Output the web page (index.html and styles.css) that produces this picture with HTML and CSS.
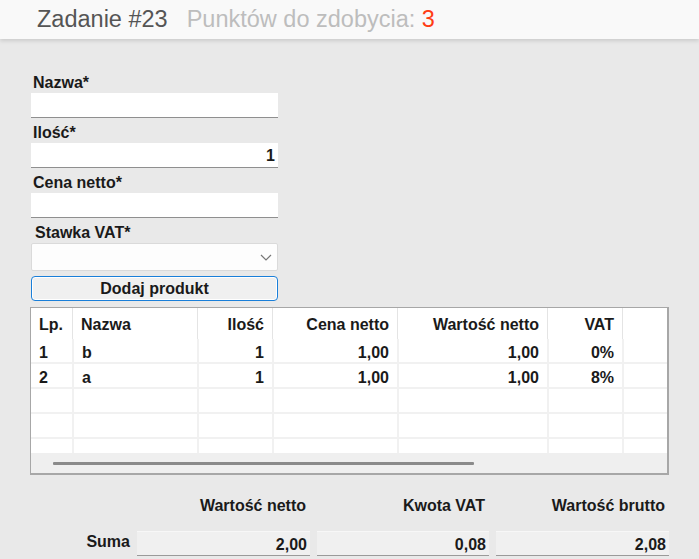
FILE: index.html
```html
<!DOCTYPE html>
<html lang="pl">
<head>
<meta charset="utf-8">
<title>Zadanie #23</title>
<link rel="stylesheet" href="styles.css">
</head>
<body>
<header class="topbar">
  <span class="task">Zadanie #23</span>
  <span class="points">Punktów do zdobycia: <span class="points-num">3</span></span>
</header>

<main class="content">
  <form class="form">
    <label class="field-label">Nazwa*</label>
    <div class="text-input"></div>
    <label class="field-label">Ilość*</label>
    <div class="text-input align-right">1</div>
    <label class="field-label">Cena netto*</label>
    <div class="text-input"></div>
    <label class="field-label label-shift">Stawka VAT*</label>
    <div class="select">
      <svg class="chevron" width="12" height="7" viewBox="0 0 12 7"><path d="M1 1 L6 6 L11 1" fill="none" stroke="#777" stroke-width="1.2"/></svg>
    </div>
    <div class="button">Dodaj produkt</div>
  </form>

  <div class="grid-box">
    <div class="grid-body">
      <div class="row head">
        <div class="cell c-lp">Lp.</div>
        <div class="cell c-name">Nazwa</div>
        <div class="cell c-qty num">Ilość</div>
        <div class="cell c-price num">Cena netto</div>
        <div class="cell c-net num">Wartość netto</div>
        <div class="cell c-vat num">VAT</div>
        <div class="cell c-rest"></div>
      </div>
      <div class="row">
        <div class="cell c-lp">1</div>
        <div class="cell c-name">b</div>
        <div class="cell c-qty num">1</div>
        <div class="cell c-price num">1,00</div>
        <div class="cell c-net num">1,00</div>
        <div class="cell c-vat num">0%</div>
        <div class="cell c-rest"></div>
      </div>
      <div class="row">
        <div class="cell c-lp">2</div>
        <div class="cell c-name">a</div>
        <div class="cell c-qty num">1</div>
        <div class="cell c-price num">1,00</div>
        <div class="cell c-net num">1,00</div>
        <div class="cell c-vat num">8%</div>
        <div class="cell c-rest"></div>
      </div>
      <div class="row">
        <div class="cell c-lp"></div><div class="cell c-name"></div><div class="cell c-qty"></div><div class="cell c-price"></div><div class="cell c-net"></div><div class="cell c-vat"></div><div class="cell c-rest"></div>
      </div>
      <div class="row">
        <div class="cell c-lp"></div><div class="cell c-name"></div><div class="cell c-qty"></div><div class="cell c-price"></div><div class="cell c-net"></div><div class="cell c-vat"></div><div class="cell c-rest"></div>
      </div>
      <div class="row">
        <div class="cell c-lp"></div><div class="cell c-name"></div><div class="cell c-qty"></div><div class="cell c-price"></div><div class="cell c-net"></div><div class="cell c-vat"></div><div class="cell c-rest"></div>
      </div>
    </div>
    <div class="hscroll"><div class="thumb"></div></div>
  </div>

  <div class="summary">
    <div></div>
    <div class="sum-head">Wartość netto</div>
    <div class="sum-head">Kwota VAT</div>
    <div class="sum-head">Wartość brutto</div>
    <div class="sum-label">Suma</div>
    <div class="sum-box">2,00</div>
    <div class="sum-box">0,08</div>
    <div class="sum-box">2,08</div>
  </div>
</main>
</body>
</html>
```

FILE: styles.css
```css
* { box-sizing: border-box; }

html, body {
  margin: 0;
  padding: 0;
  background: #e9e9e9;
  font-family: "Liberation Sans", Arial, sans-serif;
  color: #1a1a1a;
  width: 699px;
  height: 559px;
  overflow: hidden;
}

.topbar {
  height: 39px;
  background: #f9f9f9;
  box-shadow: 0 2px 4px rgba(0, 0, 0, 0.13);
  display: flex;
  align-items: center;
  padding-left: 37px;
  font-size: 23.5px;
  position: relative;
}

.task {
  color: #555;
  margin-right: 19px;
}

.points {
  color: #bdbdbd;
}

.points-num {
  color: #ff3c14;
}

.content {
  padding-top: 29px;
}

.form {
  width: 247px;
  margin-left: 31px;
  display: flex;
  flex-direction: column;
  font-weight: bold;
  font-size: 16px;
}

.field-label {
  height: 25px;
  padding-top: 4px;
  line-height: 21px;
  padding-left: 2px;
}

.label-shift {
  padding-left: 4px;
}

.text-input {
  height: 25px;
  background: #fff;
  border-bottom: 1px solid #8f8f8f;
  line-height: 25px;
  padding: 0 3px;
}

.align-right {
  text-align: right;
}

.select {
  height: 28px;
  background: #fdfdfd;
  border: 1px solid #dadada;
  border-radius: 2px;
  display: flex;
  justify-content: flex-end;
  align-items: center;
  padding-right: 5px;
}

.button {
  margin-top: 5px;
  height: 25px;
  border: 1px solid #1a7fd9;
  border-radius: 4px;
  background: #f0f0f0;
  box-shadow: inset 0 0 0 1px #fff;
  text-align: center;
  line-height: 23px;
}

.grid-box {
  margin: 6px 0 0 30px;
  width: 639px;
  height: 168px;
  border: 2px solid #a7a7a7;
  border-left-width: 1px;
  border-top-width: 1px;
  background: #fff;
  display: flex;
  flex-direction: column;
  font-weight: bold;
  font-size: 16px;
}

.grid-body {
  height: 145px;
  overflow: hidden;
}

.row {
  display: grid;
  grid-template-columns: 41px 125px 75px 125px 150px 75px 1fr;
  height: 25px;
  border-bottom: 2px solid #f1f1f1;
}

.row.head {
  height: 31px;
  border-bottom: none;
}

.cell {
  padding: 2px 8px 0;
  line-height: 23px;
  border-left: 2px solid #f1f1f1;
  white-space: nowrap;
}

.row.head .cell {
  padding-top: 3px;
  line-height: 28px;
  border-left: 1px solid #e4e4e4;
}

.row .c-lp,
.row.head .c-lp {
  border-left: none;
}

.num {
  text-align: right;
}

.hscroll {
  flex: 1;
  background: #efefef;
  display: flex;
  align-items: center;
  padding-left: 22px;
}

.thumb {
  width: 421px;
  height: 3px;
  background: #8a8a8a;
  border-radius: 1px;
}

.summary {
  margin-top: 19px;
  display: grid;
  grid-template-columns: 130px 173px 172px 173px;
  grid-template-rows: 24px 25px;
  column-gap: 7px;
  row-gap: 13px;
  font-weight: bold;
  font-size: 16px;
}

.sum-head {
  text-align: right;
  padding-right: 4px;
  line-height: 24px;
}

.sum-label {
  text-align: right;
  line-height: 21px;
}

.sum-box {
  background: #f0f0f0;
  border-top: 1px solid #f7f7f7;
  border-bottom: 1px solid #9a9a9a;
  text-align: right;
  padding-right: 3px;
  line-height: 25px;
}
```
